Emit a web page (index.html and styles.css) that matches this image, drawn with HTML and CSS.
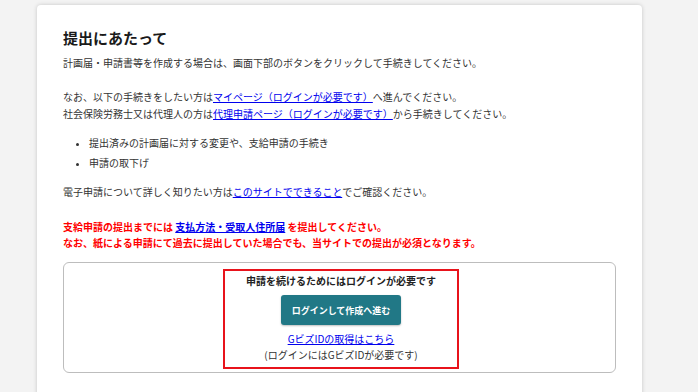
FILE: index.html
```html
<!DOCTYPE html>
<html lang="ja">
<head>
<meta charset="utf-8">
<link rel="stylesheet" href="styles.css">
</head>
<body>
<div class="card">
  <h1 class="title">提出にあたって</h1>
  <p class="para first">計画届・申請書等を作成する場合は、画面下部のボタンをクリックして手続きしてください。</p>
  <p class="para gap">なお、以下の手続きをしたい方は<a class="link" href="#">マイページ（ログインが必要です）</a>へ進んでください。<br>社会保険労務士又は代理人の方は<a class="link" href="#">代理申請ページ（ログインが必要です）</a>から手続きしてください。</p>
  <ul class="list">
    <li class="item">提出済みの計画届に対する変更や、支給申請の手続き</li>
    <li class="item">申請の取下げ</li>
  </ul>
  <p class="para after-list">電子申請について詳しく知りたい方は<a class="link" href="#">このサイトでできること</a>でご確認ください。</p>
  <p class="warn">支給申請の提出までには <a class="link strong" href="#">支払方法・受取人住所届</a> を提出してください。<br>なお、紙による申請にて過去に提出していた場合でも、当サイトでの提出が必須となります。</p>
  <div class="box">
    <div class="login">
      <div class="login-title">申請を続けるためにはログインが必要です</div>
      <button class="btn" type="button">ログインして作成へ進む</button>
      <a class="link" href="#">GビズIDの取得はこちら</a>
      <div class="note">(ログインにはGビズIDが必要です)</div>
    </div>
  </div>
</div>
</body>
</html>
```
FILE: styles.css
```css
html, body {
  margin: 0;
  padding: 0;
}
body {
  background: #f3f3f3;
  font-family: "Noto Sans CJK JP", "Noto Sans", sans-serif;
  color: #333;
  font-size: 10px;
  line-height: 17px;
  height: 392px;
  overflow: hidden;
}
.card {
  box-sizing: border-box;
  width: 605px;
  margin: 5px 0 0 37px;
  padding: 23px 26px 40px;
  background: #fff;
  border-radius: 4px;
  box-shadow: 0 0 4px rgba(0, 0, 0, 0.18);
  min-height: 420px;
}
.title {
  margin: 0;
  font-size: 15px;
  line-height: 20px;
  font-weight: bold;
  color: #1a1a1a;
}
.para {
  margin: 0;
}
.first {
  margin-top: 6px;
}
.gap {
  margin-top: 17px;
}
.after-list {
  margin-top: 12px;
}
.link {
  color: #0000ee;
  text-decoration: underline;
}
.strong {
  font-weight: bold;
}
.list {
  margin: 12px 0 0;
  padding-left: 26px;
}
.item {
  margin-bottom: 3px;
}
.item::marker {
  font-size: 9px;
}
.warn {
  margin: 19px 0 0;
  color: #f00;
  font-weight: bold;
  line-height: 16px;
}
.box {
  margin-top: 11px;
  border: 1px solid #bdbdbd;
  border-radius: 6px;
  padding: 6px 0 3px;
  display: flex;
  justify-content: center;
}
.login {
  box-sizing: border-box;
  width: 236px;
  margin-left: 3px;
  border: 2px solid #e8131b;
  padding: 2px 0 4px;
  display: flex;
  flex-direction: column;
  align-items: center;
  line-height: 16px;
}
.login-title {
  font-weight: bold;
  color: #222;
}
.btn {
  margin: 6px 0 6px;
  width: 120px;
  height: 30px;
  padding: 0;
  border: none;
  border-radius: 3px;
  background: #217886;
  color: #fff;
  font-family: inherit;
  font-size: 9px;
  font-weight: bold;
  white-space: nowrap;
  box-shadow: 0 1px 2px rgba(0, 0, 0, 0.25);
}
.note {
  color: #333;
}
```
